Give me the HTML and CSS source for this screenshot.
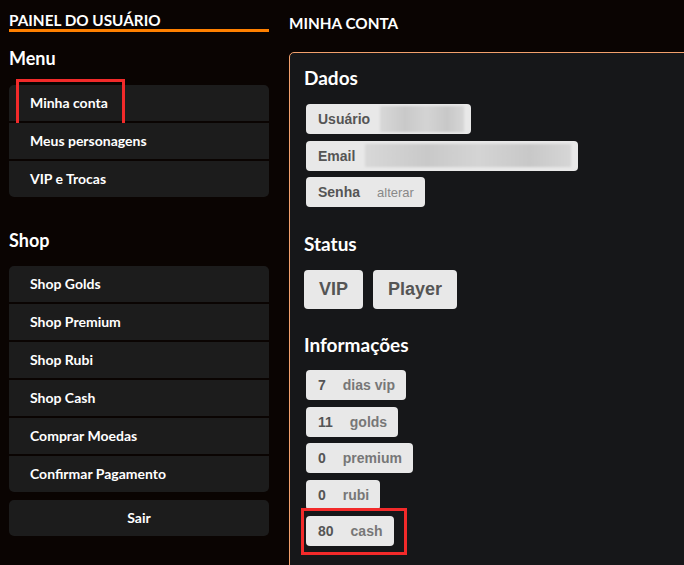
FILE: index.html
```html
<!DOCTYPE html>
<html lang="pt-BR">
<head>
  <meta charset="UTF-8">
  <meta name="viewport" content="width=device-width, initial-scale=1.0">
  <title>Painel do Usuário</title>
  <link rel="stylesheet" href="styles.css">
</head>
<body>
  <div class="page">
    <aside class="sidebar">
      <h2 class="panel-title">Painel do usuário</h2>
      <h3 class="side-heading">Menu</h3>
      <nav class="side-menu">
        <a class="side-link" href="#">Minha conta<span class="mark mark-menu"></span></a>
        <a class="side-link" href="#">Meus personagens</a>
        <a class="side-link" href="#">VIP e Trocas</a>
      </nav>
      <h3 class="side-heading shop-heading">Shop</h3>
      <nav class="side-menu">
        <a class="side-link" href="#">Shop Golds</a>
        <a class="side-link" href="#">Shop Premium</a>
        <a class="side-link" href="#">Shop Rubi</a>
        <a class="side-link" href="#">Shop Cash</a>
        <a class="side-link" href="#">Comprar Moedas</a>
        <a class="side-link" href="#">Confirmar Pagamento</a>
      </nav>
      <a class="side-link logout" href="#">Sair</a>
    </aside>

    <main class="content">
      <h2 class="content-title">Minha conta</h2>
      <section class="account">
        <h3 class="section-heading">Dados</h3>
        <div class="fields">
          <div class="field"><span class="field-label">Usuário</span><span class="blur blur-user"></span></div>
          <div class="field"><span class="field-label">Email</span><span class="blur blur-email"></span></div>
          <div class="field field-pass"><span class="field-label">Senha</span><a class="field-link" href="#">alterar</a></div>
        </div>

        <h3 class="section-heading spaced">Status</h3>
        <div class="badges">
          <span class="badge">VIP</span>
          <span class="badge">Player</span>
        </div>

        <h3 class="section-heading spaced info-heading">Informações</h3>
        <div class="fields">
          <div class="info"><span class="info-num">7</span><span class="info-label">dias vip</span></div>
          <div class="info"><span class="info-num">11</span><span class="info-label">golds</span></div>
          <div class="info"><span class="info-num">0</span><span class="info-label">premium</span></div>
          <div class="info"><span class="info-num">0</span><span class="info-label">rubi</span></div>
          <div class="info"><span class="info-num">80</span><span class="info-label">cash</span><span class="mark mark-cash"></span></div>
        </div>
      </section>
    </main>
  </div>
</body>
</html>
```

FILE: styles.css
```css
html, body {
  margin: 0;
  height: 100%;
  overflow: hidden;
}
body {
  background-color: #0a0402;
  font-family: Lato, 'Open Sans', sans-serif;
  color: #ffffff;
}
.page {
  display: flex;
  align-items: flex-start;
}

/* sidebar */
.sidebar {
  width: 260px;
  flex-shrink: 0;
  margin-left: 9px;
  padding-top: 11px;
}
.panel-title {
  margin: 0;
  font-size: 15.3px;
  line-height: 18px;
  font-weight: 700;
  text-transform: uppercase;
  border-bottom: 3px solid #ff8000;
}
.side-heading {
  margin: 15px 0 16px;
  font-size: 18px;
  line-height: 22px;
  font-weight: 700;
}
.shop-heading {
  margin-top: 32px;
  margin-bottom: 15px;
}
.side-menu {
  display: flex;
  flex-direction: column;
  gap: 2px;
}
.side-link {
  position: relative;
  display: block;
  height: 36px;
  line-height: 36px;
  padding-left: 21px;
  background: #1c1c1c;
  color: #ffffff;
  font-size: 14px;
  font-weight: 700;
  text-decoration: none;
}
.side-menu .side-link:first-child {
  border-radius: 5px 5px 0 0;
}
.side-menu .side-link:last-child {
  border-radius: 0 0 5px 5px;
}
.logout {
  margin-top: 8px;
  padding-left: 0;
  text-align: center;
  border-radius: 5px;
}

/* content */
.content {
  flex: 1;
  margin-left: 20px;
  margin-right: -20px;
  padding-top: 14px;
}
.content-title {
  margin: 0 0 20px;
  font-size: 15.3px;
  line-height: 18px;
  font-weight: 700;
  text-transform: uppercase;
}
.account {
  height: 600px;
  padding: 13px 14px 0;
  background: #161719;
  border: 1px solid #f2a06c;
  border-radius: 5px 0 0 0;
}
.section-heading {
  margin: 0 0 15px;
  font-size: 19px;
  line-height: 23px;
  font-weight: 700;
}
.section-heading.spaced {
  margin-top: 25px;
}
.section-heading.info-heading {
  margin-top: 24px;
  margin-bottom: 14px;
}
.fields {
  display: flex;
  flex-direction: column;
  align-items: flex-start;
  gap: 6.5px;
  margin-left: 2px;
}
.field, .info, .badge {
  position: relative;
  display: inline-flex;
  align-items: center;
  background: #e8e8e8;
  border-radius: 4px;
  font-family: 'Liberation Sans', Arial, sans-serif;
  font-weight: 700;
  color: #555555;
}
.field {
  height: 30px;
  padding: 0 7px 0 12px;
  font-size: 14px;
}
.field-label {
  margin-right: 10px;
}
.blur {
  display: block;
  background: linear-gradient(90deg, #d8d8d8, #c9c9c9 30%, #d4d4d4 55%, #c8c8c8 80%, #d6d6d6);
  filter: blur(1px);
}
.blur-user {
  width: 84px;
  height: 26px;
}
.blur-email {
  width: 206px;
  height: 23px;
}
.field-pass {
  padding-right: 11px;
}
.field-link {
  margin-left: 7px;
  color: #888888;
  font-weight: 400;
  font-size: 13px;
  text-decoration: none;
}
.badges {
  display: flex;
  gap: 10px;
}
.badge {
  height: 39px;
  padding: 0 15px;
  font-size: 18px;
}
.info {
  height: 30px;
  padding: 0 11px 0 12px;
  font-size: 14px;
}
.info-label {
  margin-left: 17px;
  color: #777777;
}

/* highlight marks */
.mark {
  position: absolute;
  box-sizing: border-box;
  border: 3px solid #f22a2a;
  pointer-events: none;
}
.mark-menu {
  left: 7px;
  top: -6px;
  width: 109px;
  height: 47px;
}
.mark-cash {
  left: -5px;
  top: -8px;
  width: 106px;
  height: 47px;
}
```
